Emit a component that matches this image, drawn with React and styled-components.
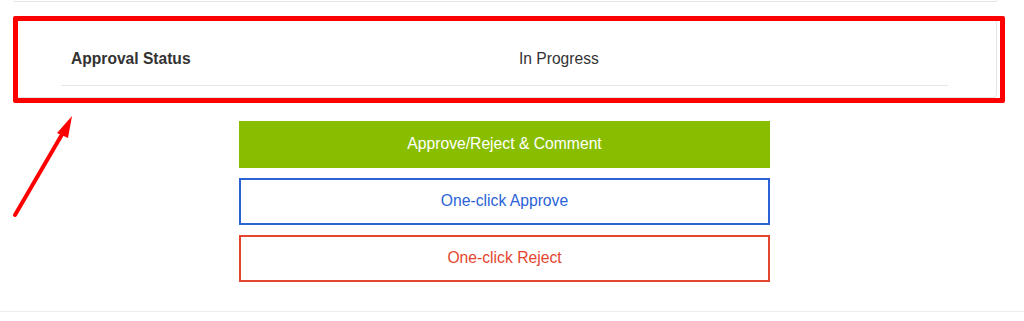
import React from 'react'
import styled, { createGlobalStyle } from 'styled-components'

const GlobalStyle = createGlobalStyle`
    html, body {
        margin: 0;
        padding: 0;
        background: #fff;
        font-family: "Liberation Sans", Arial, sans-serif;
    }
`

function App() {
    return (
        <Page>
            <GlobalStyle />
            <Content>
                <PrevCard />
                <StatusCard>
                    <Row>
                        <Label>Approval Status</Label>
                        <Value>In Progress</Value>
                    </Row>
                </StatusCard>
                <Actions>
                    <Button variant="primary">Approve/Reject &amp; Comment</Button>
                    <Button variant="approve">One-click Approve</Button>
                    <Button variant="reject">One-click Reject</Button>
                </Actions>
            </Content>
            <Footer />

            {/* screenshot annotation */}
            <Highlight />
            <Arrow width="90" height="110" viewBox="0 0 90 110">
                <line x1="15" y1="104" x2="64" y2="20" stroke="#ff0000" strokeWidth="4" strokeLinecap="round" />
                <polygon points="72,5 57,22 68,27" fill="#ff0000" />
            </Arrow>
        </Page>
    )
}

export default App

const Page = styled.div`
    position: relative;
    width: 1024px;
    height: 321px;
    overflow: hidden;
`
const Content = styled.div`
    width: 984px;
    margin-left: 13px;
    display: flex;
    flex-direction: column;
`
const PrevCard = styled.div`
    height: 1px;
    border: 1px solid #e4e4e4;
    border-top: none;
    border-radius: 0 0 4px 4px;
`
const StatusCard = styled.div`
    margin-top: 17px;
    border: 1px solid #e4e4e4;
    border-radius: 4px;
    padding: 12px 48px 11px 47px;
    height: 54px;
`
const Row = styled.div`
    display: grid;
    grid-template-columns: 448px 1fr;
    align-items: center;
    height: 53px;
    border-bottom: 1px solid #e6e6e6;
    color: #333;
    font-size: 15.6px;
    > * { padding: 0 10px; }
`
const Label = styled.div`
    font-weight: bold;
`
const Value = styled.div``

const Actions = styled.div`
    align-self: center;
    width: 531px;
    margin: 23px 0 0 -1px;
    display: flex;
    flex-direction: column;
    gap: 10px;
`
const colors = {
    primary: { bg: '#89be00', border: '#89be00', text: '#fff' },
    approve: { bg: '#fff', border: '#2b62d6', text: '#2b62d6' },
    reject: { bg: '#fff', border: '#e4452f', text: '#e4452f' },
}
const Button = styled.button`
    height: 47px;
    box-sizing: border-box;
    background: ${props => colors[props.variant].bg};
    border: 2px solid ${props => colors[props.variant].border};
    color: ${props => colors[props.variant].text};
    font-family: "Liberation Sans", Arial, sans-serif;
    font-size: 15.7px;
    cursor: pointer;
    padding: 0 0 2px;
`
const Footer = styled.div`
    margin-top: 29px;
    border-top: 1px solid #ececec;
`
const Highlight = styled.div`
    position: absolute;
    left: 13px;
    top: 16px;
    width: 982px;
    height: 77px;
    border: 5px solid #ff0000;
    border-radius: 2px;
    pointer-events: none;
`
const Arrow = styled.svg`
    position: absolute;
    left: 0;
    top: 111px;
`
